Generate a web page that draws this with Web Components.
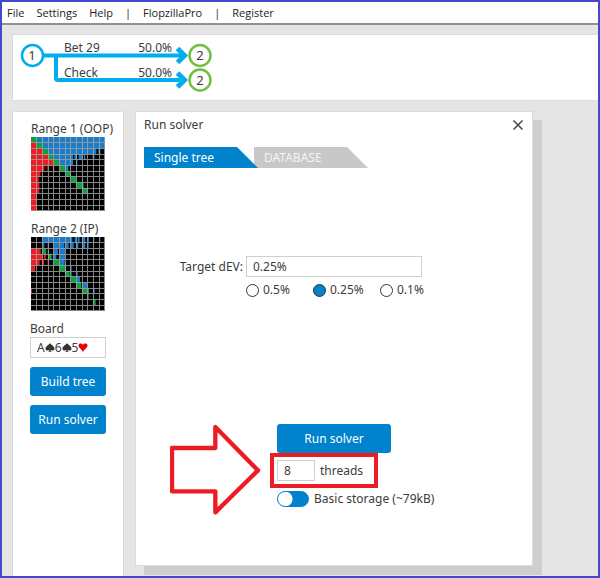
<!DOCTYPE html>
<html lang="en">
<head>
<meta charset="utf-8">
<meta name="viewport" content="width=device-width, initial-scale=1">
<title>Run solver</title>
<style>
  :root {
    --blue: #0082cd;
    --ink: #3c3c3c;
    --line: #cfcfcf;
    --red: #ed1c24;
  }
  body {
    margin: 0;
    font: 12px/16px "Noto Sans", "Open Sans", sans-serif;
    color: var(--ink);
  }
</style>
</head>
<body>
<solver-app></solver-app>

<script>
const define = (name, html, setup) => {
  const template = document.createElement('template');
  template.innerHTML = html;
  customElements.define(name, class extends HTMLElement {
    constructor() {
      super();
      this.attachShadow({ mode: 'open' }).append(template.content.cloneNode(true));
    }
    connectedCallback() {
      if (setup && !this.ready) { this.ready = true; setup(this, this.shadowRoot); }
    }
  });
};

define('menu-bar', `
  <style>
    :host { display: block; background: #fff; border-bottom: 2px solid #919191; color: #1c1c1c; }
    nav { display: flex; align-items: center; gap: 12px; height: 21px; padding: 0 5px;
      font: 11px/16px "Open Sans", sans-serif; }
    button { font: inherit; color: inherit; background: none; border: 0; padding: 0; }
  </style>
  <nav>
    <button>File</button><button>Settings</button><button>Help</button><span>|</span>
    <button>FlopzillaPro</button><span>|</span><button>Register</button>
  </nav>`);

define('tree-view', `
  <style>
    :host { display: block; background: #fff; border: 1px solid #dcdcdc; border-right: 0; }
    svg { display: block; width: 210px; height: 65px; }
    text { font: 12px "Noto Sans", "Open Sans", sans-serif; fill: var(--ink); }
    .num { text-anchor: middle; font-size: 13px; }
    .pct { text-anchor: end; }
  </style>
  <svg viewBox="13 35 210 65" role="img" aria-label="Game tree">
    <g fill="none" stroke="#00adef" stroke-width="4">
      <path d="M43 55.500H184M56 55V78.500Q56 80 58 80H184"/>
      <path d="M177.500 48.500L184.500 55.500L177.500 62.500M177.500 73L184.500 80L177.500 87" stroke-width="5"/>
      <circle cx="32.500" cy="55.500" r="10.500" stroke-width="2.500"/>
    </g>
    <g fill="#fff" stroke="#72bf44" stroke-width="2.500">
      <circle cx="200" cy="55.500" r="10.500"/><circle cx="200" cy="80" r="10.500"/>
    </g>
    <text class="num" x="32" y="60">1</text>
    <text class="num" x="200" y="60">2</text>
    <text class="num" x="200" y="85">2</text>
    <text x="64" y="52">Bet 29</text><text class="pct" x="172" y="52">50.0%</text>
    <text x="64" y="77">Check</text><text class="pct" x="172" y="77">50.0%</text>
  </svg>`);

/* Each matrix row lists [colour, start, end] spans, 17 units to a cell. */
const ranges = {
  one: [
    [['g',0,17],['b',17,221]],
    [['r',0,17],['g',17,34],['b',34,221]],
    [['r',0,34],['g',34,51],['b',51,196],['b',202,208]],
    [['r',0,51],['g',51,68],['b',68,126],['b',130,138],['b',143,154],['b',159,163],['b',185,190]],
    [['r',0,68],['g',68,85],['b',85,126],['b',136,139]],
    [['r',0,40],['r',49,52],['r',67,70],['g',85,102],['b',102,112],['b',117,119]],
    [['r',0,28],['g',102,119]],
    [['r',0,23],['g',119,136]],
    [['r',0,25],['g',136,153],['b',153,158]],
    [['r',0,25],['g',153,170]],
    [['r',0,17]], [['r',0,17]], [['r',0,17]]
  ],
  two: [
    [['b',34,124],['b',131,136],['b',140,146],['b',153,163],['b',170,174],['b',187,190],['b',205,208]],
    [['b',35,40],['b',50,53],['b',67,85],['b',86,100],['b',104,113],['b',119,128],['b',136,142],['b',153,163],['b',170,173]],
    [['r',0,29],['g',34,45],['b',50,53],['b',68,81],['b',85,102]],
    [['r',0,34],['r',39,44],['g',51,62],['b',68,76],['b',85,102]],
    [['r',0,26],['r',34,39],['r',50,53],['g',68,85],['b',85,101]],
    [['r',0,12],['g',85,102],['b',102,105],['b',118,122]],
    [['g',102,116],['b',119,122],['b',137,140]],
    [['g',119,136],['b',136,147]],
    [['g',136,151],['b',153,169]],
    [['r',0,3],['g',153,170],['b',171,174],['b',187,191]],
    [['g',170,173]],
    [['g',187,194]],
    []
  ]
};

define('range-matrix', `
  <style>
    :host { display: block; }
    button { display: block; padding: 0; border: 0; background: none; font: inherit; color: inherit; text-align: left; }
    span { display: block; white-space: nowrap; padding-left: 1px; }
    svg { display: block; width: 74px; height: 74px; margin-left: 1px; }
  </style>
  <button><span><slot></slot></span><svg viewBox="0 0 222 222" aria-hidden="true"></svg></button>`,
  (host, root) => {
    const fill = { r: '#ed1c24', g: '#0ba33a', b: '#1a7cc9' };
    let out = '<rect width="222" height="222" fill="#000"/>';
    ranges[host.getAttribute('range')].forEach((row, y) => row.forEach(([c, a, b]) => {
      out += `<rect x="${a}" y="${y * 17}" width="${b - a}" height="17" fill="${fill[c]}"/>`;
    }));
    let lines = '';
    for (let i = 1; i <= 13; i++) {
      const at = Math.floor(i * 17 / 3) * 3;
      lines += `M${at} 0h3v222h-3zM0 ${at}h222v3h-222z`;
    }
    out += `<path d="${lines}" fill="#a8a8a8" fill-opacity=".8"/>`;
    root.querySelector('svg').innerHTML = out;
  });

define('app-button', `
  <style>
    :host { display: block; }
    button { width: 100%; height: 29px; border: 0; border-radius: 3px; padding: 0;
      background: var(--blue); color: #fff; font: inherit; white-space: nowrap; }
  </style>
  <button><slot></slot></button>`);

define('board-field', `
  <style>
    :host { display: block; }
    span { display: block; }
    button { display: flex; align-items: center; box-sizing: border-box; width: 100%; height: 21px;
      padding: 0 0 0 6px; border: 1px solid var(--line); background: #fff; font: inherit; color: inherit; }
    svg { flex: none; width: 10px; height: 9px; }
  </style>
  <span id="l">Board</span>
  <button aria-labelledby="l">A<svg viewBox="0 0 10 10" role="img" aria-label="spades"><path fill="#333" d="M5 0C4 2 0 3.500 0 6.200C0 9 3.500 8.900 4.500 7.300Q4.400 9 3 9.700H7Q5.600 9 5.500 7.300C6.500 8.900 10 9 10 6.200C10 3.500 6 2 5 0Z"/></svg>6<svg viewBox="0 0 10 10" role="img" aria-label="spades"><path fill="#333" d="M5 0C4 2 0 3.500 0 6.200C0 9 3.500 8.900 4.500 7.300Q4.400 9 3 9.700H7Q5.600 9 5.500 7.300C6.500 8.900 10 9 10 6.200C10 3.500 6 2 5 0Z"/></svg>5<svg viewBox="0 0 10 10" role="img" aria-label="hearts"><path fill="#f00000" d="M5 10C4 7.500 0 5.500 0 2.800C0 0 4 0 5 2.200C6 0 10 0 10 2.800C10 5.500 6 7.500 5 10Z"/></svg></button>`);

define('side-panel', `
  <style>
    :host { display: flex; flex-direction: column; box-sizing: border-box; width: 112px;
      padding: 9px 17px; background: #fff; border: 1px solid #dcdcdc; border-bottom: 0; }
    range-matrix { margin-bottom: 10px; }
    app-button { margin-top: 9px; }
  </style>
  <range-matrix range="one">Range 1 (OOP)</range-matrix>
  <range-matrix range="two">Range 2 (IP)</range-matrix>
  <board-field></board-field>
  <app-button>Build tree</app-button>
  <app-button>Run solver</app-button>`);

define('tab-strip', `
  <style>
    :host { display: flex; }
    button { width: 114px; height: 21px; padding: 0 0 0 10px; border: 0; text-align: left;
      font: inherit; color: #f4f4f4; background: #c8c8c8;
      clip-path: polygon(0 0, calc(100% - 21px) 0, 100% 100%, 0 100%); }
    button + button { margin-left: -4px; }
    [aria-selected=true] { background: var(--blue); color: #fff; position: relative; z-index: 1; }
  </style>
  <button role="tab" aria-selected="true">Single tree</button>
  <button role="tab" aria-selected="false">DATABASE</button>`);

define('target-field', `
  <style>
    :host { display: grid; grid-template-columns: 1fr 176px 1fr; row-gap: 5px; align-items: center; }
    .name { justify-self: end; padding-right: 3px; white-space: nowrap; }
    input[type=text] { box-sizing: border-box; width: 100%; height: 21px; margin: 0; padding: 0 6px;
      border: 1px solid var(--line); font: inherit; color: inherit; }
    .options { grid-column: 2; display: grid; grid-template-columns: repeat(3, 67px); }
    .options label { display: flex; align-items: center; gap: 4px; white-space: nowrap; }
    input[type=radio] { appearance: none; box-sizing: border-box; width: 13px; height: 13px; margin: 0;
      border: 1px solid #333; border-radius: 50%; background: #fff; }
    input[type=radio]:checked { background: var(--blue); }
  </style>
  <label class="name" for="dev">Target dEV:</label>
  <input id="dev" type="text" value="0.25%">
  <div class="options">
    <label><input type="radio" name="dev">0.5%</label>
    <label><input type="radio" name="dev" checked>0.25%</label>
    <label><input type="radio" name="dev">0.1%</label>
  </div>`);

define('thread-field', `
  <style>
    :host { display: block; position: relative; }
    label { display: flex; align-items: center; gap: 5px; white-space: nowrap; }
    input { box-sizing: border-box; width: 38px; height: 21px; margin: 0; padding: 0 6px;
      border: 1px solid var(--line); font: inherit; color: inherit; }
    .mark { position: absolute; left: -7px; top: -7px; width: 108px; height: 35px;
      box-sizing: border-box; border: 4px solid var(--red); pointer-events: none; }
    svg { position: absolute; left: -107px; top: -36px; width: 92px; height: 92px; pointer-events: none; }
  </style>
  <label><input type="text" value="8">threads</label>
  <div class="mark"></div>
  <svg viewBox="0 0 276 276" aria-hidden="true">
    <path d="M6 72H136V9L264 139L136 265V202H6Z" fill="none" stroke="#ed1c24" stroke-width="13" stroke-linejoin="round"/>
  </svg>`);

define('storage-toggle', `
  <style>
    :host { display: block; }
    label { display: flex; align-items: center; gap: 5px; white-space: nowrap; }
    input { appearance: none; box-sizing: border-box; flex: none; width: 32px; height: 16px; margin: 0; border-radius: 8px;
      border: 1px solid var(--blue); background: radial-gradient(circle at 7px 7px, #fff 7px, var(--blue) 8px); }
  </style>
  <label><input type="checkbox" role="switch"><slot></slot></label>`);

define('solver-dialog', `
  <style>
    :host { display: flex; flex-direction: column; box-sizing: border-box; padding: 5px 8px 58px;
      background: #fff; border: 1px solid #dcdcdc; box-shadow: 9px 9px 0 #cecece; }
    header { display: flex; justify-content: space-between; align-items: center; margin-bottom: 14px; }
    h1 { font: inherit; margin: 0; }
    .close { border: 0; padding: 0; background: none; width: 12px; height: 16px; display: grid; place-items: center; }
    .close svg { width: 12px; height: 12px; }
    target-field { margin-top: 88px; }
    .run { align-self: center; width: 114px; margin-top: auto; display: grid;
      grid-template-columns: minmax(0, 1fr); gap: 7px; }
    storage-toggle { margin-top: 3px; }
  </style>
  <header><h1>Run solver</h1>
    <button class="close" aria-label="Close"><svg viewBox="0 0 12 12"><path d="M1.500 1.500L10.500 10.500M10.500 1.500L1.500 10.500" stroke="#444" stroke-width="1.500"/></svg></button></header>
  <tab-strip role="tablist"></tab-strip>
  <target-field></target-field>
  <div class="run">
    <app-button>Run solver</app-button>
    <thread-field></thread-field>
    <storage-toggle>Basic storage (~79kB)</storage-toggle>
  </div>`);

define('solver-app', `
  <style>
    :host { display: flex; flex-direction: column; box-sizing: border-box; min-height: 100vh;
      border: 2px solid #4349cc; background: #e5e5e5; }
    main { flex: 1; display: flex; flex-direction: column; gap: 10px; padding: 9px 0 0 10px; }
    .work { flex: 1; display: flex; gap: 11px; }
    side-panel { flex: none; }
    solver-dialog { flex: 1; margin: 0 65px 10px 0; }
  </style>
  <menu-bar></menu-bar>
  <main>
    <tree-view></tree-view>
    <div class="work"><side-panel></side-panel><solver-dialog></solver-dialog></div>
  </main>`);
</script>
</body>
</html>
